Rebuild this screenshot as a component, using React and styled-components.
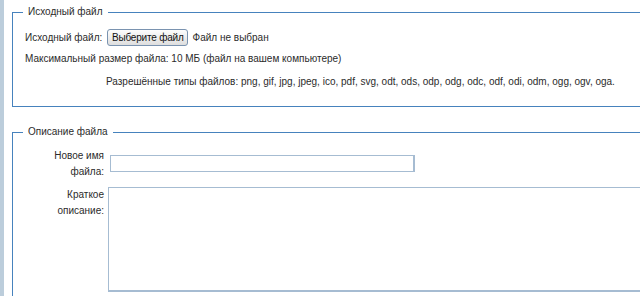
import React from "react";
import styled, { createGlobalStyle } from "styled-components";

const GlobalStyle = createGlobalStyle`
  html, body {
    margin: 0;
    padding: 0;
    background: #fff;
    overflow: hidden;
  }
  body {
    font-family: "Liberation Sans", Arial, sans-serif;
    font-size: 10px;
    color: #2b2b2b;
  }
`;

const Page = styled.div`
  display: flex;
  width: 700px;
  min-height: 296px;
`;

const SideStrip = styled.div`
  width: 4px;
  flex-shrink: 0;
  background: #bccddb;
`;

const Content = styled.div`
  flex: 1;
  padding: 5px 0 0 8px;
`;

const Fieldset = styled.fieldset`
  margin: 0 0 18px 0;
  padding: ${(p) => p.$pt || 6}px 12px 16px 12px;
  border: 1px solid #4682bd;
  border-right: none;
  min-width: 0;
`;

const Legend = styled.legend`
  padding: 0 5px;
  margin-left: -2px;
  line-height: 14px;
`;

const FormGrid = styled.div`
  display: grid;
  grid-template-columns: 83px 1fr;
  row-gap: ${(p) => p.$gap || 0}px;
`;

const Label = styled.div`
  text-align: right;
  padding-right: 4px;
  line-height: 16px;
`;

const Cell = styled.div`
  grid-column: ${(p) => (p.$span ? "1 / span 2" : "auto")};
  display: flex;
  align-items: center;
  gap: 5px;
  height: 18px;
  margin-top: ${(p) => p.$pt || 0}px;
  margin-left: ${(p) => p.$indent || 0}px;
  white-space: nowrap;
`;

const FileButton = styled.button`
  font-family: "Liberation Sans", Arial, sans-serif;
  font-size: 10px;
  letter-spacing: -0.2px;
  color: #111;
  height: 17px;
  padding: 0 3px 0 4px;
  margin: 0 0 0 -1px;
  border: 1px solid #7a93b0;
  border-radius: 3px;
  background: linear-gradient(#fdfdfd, #dedede);
`;

const FieldCell = styled.div`
  align-self: ${(p) => p.$align || "start"};
  margin-top: ${(p) => p.$mt || 0}px;
`;

const TextInput = styled.input`
  display: block;
  box-sizing: border-box;
  width: 305px;
  height: 17px;
  margin: 0 0 0 2px;
  padding: 1px 2px;
  border: 1px solid #a6bcd2;
  border-right-width: 2px;
  background: #fff;
`;

const TextArea = styled.textarea`
  display: block;
  box-sizing: border-box;
  width: 560px;
  height: 105px;
  margin: 0;
  padding: 2px;
  border: 1px solid #a6bcd2;
  border-bottom-width: 2px;
  resize: none;
  background: #fff;
`;

export default function App() {
  return (
    <>
      <GlobalStyle />
      <Page>
        <SideStrip />
        <Content>
          <Fieldset>
            <Legend>Исходный файл</Legend>
            <FormGrid>
              <Cell $pt={3}>Исходный файл:</Cell>
              <Cell $pt={3}>
                <FileButton>Выберите файл</FileButton>
                <span>Файл не выбран</span>
              </Cell>
              <Cell $span $pt={3}>
                Максимальный размер файла: 10 МБ (файл на вашем компьютере)
              </Cell>
              <div />
              <Cell $pt={5} $indent={-2}>
                Разрешённые типы файлов: png, gif, jpg, jpeg, ico, pdf, svg, odt, ods, odp, odg, odc, odf, odi, odm, ogg, ogv, oga.
              </Cell>
            </FormGrid>
          </Fieldset>
          <Fieldset $pt={9}>
            <Legend>Описание файла</Legend>
            <FormGrid $gap={7}>
              <Label>
                Новое имя
                <br />
                файла:
              </Label>
              <FieldCell $align="center" $mt={-2}>
                <TextInput type="text" />
              </FieldCell>
              <Label>
                Краткое
                <br />
                описание:
              </Label>
              <FieldCell>
                <TextArea />
              </FieldCell>
            </FormGrid>
          </Fieldset>
        </Content>
      </Page>
    </>
  );
}
